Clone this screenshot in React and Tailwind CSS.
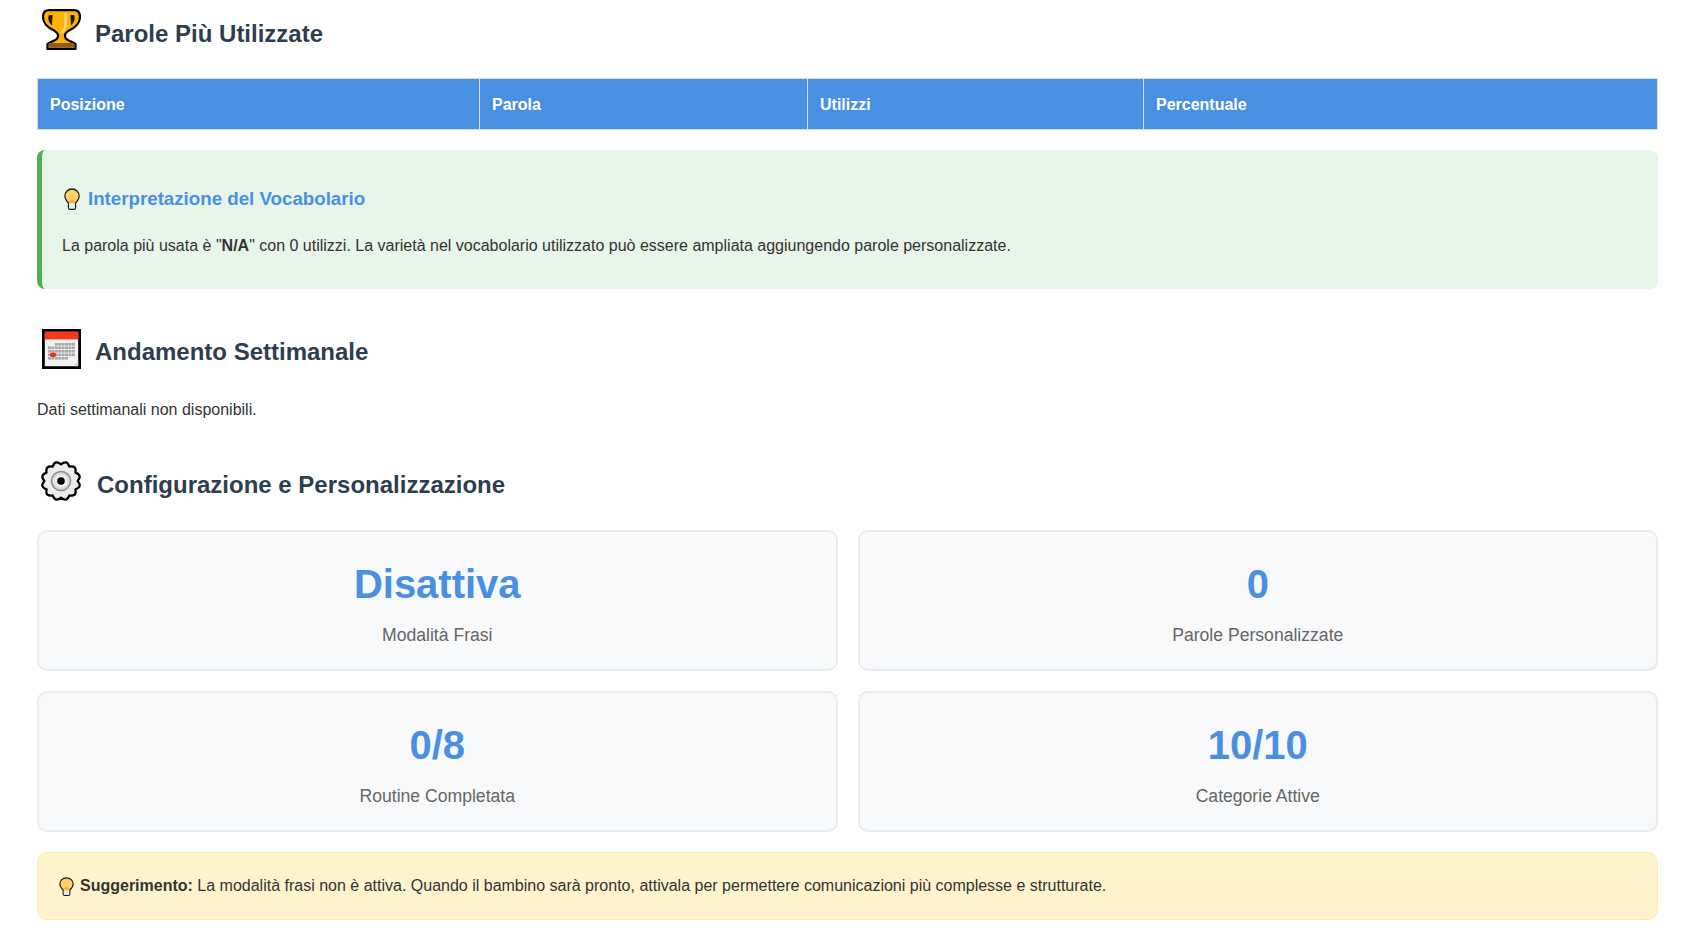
const gearPath = (() => {
  const teeth = 12;
  const cx = 21, cy = 21;
  let d = "";
  for (let i = 0; i < teeth; i++) {
    const a0 = (i / teeth) * Math.PI * 2;
    const a1 = ((i + 0.5) / teeth) * Math.PI * 2;
    const a2 = ((i + 1) / teeth) * Math.PI * 2;
    const p = (r, a) => `${(cx + r * Math.cos(a)).toFixed(2)} ${(cy + r * Math.sin(a)).toFixed(2)}`;
    if (i === 0) d += `M${p(17.5, a0)} `;
    d += `Q${p(23.5, a1)} ${p(17.5, a2)} `;
  }
  return d + "Z";
})();
const Trophy = () => (
  <svg width="39" height="41" viewBox="0 0 39 41" className="ml-[5px] -mt-[1px] shrink-0">
    <path d="M7 1.2 H32 C36 1.2 38 4 38 8 C38 14 33 19 27 21.5 C25 23 23.5 24 23 25.5 V27 C23 29.5 26 31.5 29 32.5 L33.5 35 V40 H5.5 V35 L10 32.5 C13 31.5 16 29.5 16 27 V25.5 C15.5 24 14 23 12 21.5 C6 19 1 14 1 8 C1 4 3 1.2 7 1.2 Z" fill="#ffb300" stroke="#000" strokeWidth="2.2" strokeLinejoin="round" />
    <path d="M7 6 C5.6 9 6.2 13 10 16.5 L10.6 6 Z M32 6 C33.4 9 32.8 13 29 16.5 L28.4 6 Z" fill="#1a1a1a" />
    <path d="M23.5 5 C24.5 13 24 19 20.5 23" fill="none" stroke="#ffd67a" strokeWidth="2.6" strokeLinecap="round" />
    <rect x="6.8" y="34" width="25.4" height="4.8" fill="#8d5a2b" />
  </svg>
);
const cols = [0, 1, 2, 3, 4, 5, 6, 7];
const Calendar = () => (
  <svg width="39" height="40" viewBox="0 0 39 40" className="ml-[5px] shrink-0">
    <rect x="1.4" y="1.4" width="36.2" height="37.2" fill="#f2f2f2" stroke="#000" strokeWidth="2.8" />
    <rect x="2.8" y="2.8" width="33.4" height="7.6" fill="#f4381a" />
    <g fill="#a8a8a8">
      {cols.map((c) => (
        <g key={c}>
          {c > 1 && <rect x={6 + c * 3.4} y="14" width="3" height="2.6" />}
          <rect x={6 + c * 3.4} y="17.5" width="3" height="2.6" />
          <rect x={6 + c * 3.4} y="21" width="3" height="2.6" />
          <rect x={6 + c * 3.4} y="24.5" width="3" height="2.6" />
          {c < 6 && <rect x={6 + c * 3.4} y="28" width="3" height="2.6" />}
        </g>
      ))}
    </g>
    <ellipse cx="11" cy="25.8" rx="3.2" ry="2.3" fill="#f02a1a" />
    <path d="M32 36.2 L36.2 32 V36.2 Z" fill="#d0d0d0" />
  </svg>
);
const Gear = () => (
  <svg width="40" height="40" viewBox="0 0 42 42" className="ml-[4px] shrink-0">
    <path d={gearPath} fill="#ececec" stroke="#000" strokeWidth="2.4" strokeLinejoin="round" />
    <circle cx="21" cy="21" r="10" fill="#dcdcdc" stroke="#8a8a8a" strokeWidth="1.6" />
    <circle cx="21" cy="21" r="6.8" fill="#f0f0f0" />
    <circle cx="21" cy="21" r="4" fill="#000" />
  </svg>
);
const Bulb = ({ className }) => (
  <svg viewBox="0 0 18 22" preserveAspectRatio="none" className={"shrink-0 " + className}>
    <path d="M9 1 C4.5 1 1 4 1 8 C1 11 3 13 5 15 V20 C5 21 6 21.3 7 21.3 H11 C12 21.3 13 21 13 20 V15 C15 13 17 11 17 8 C17 4 13.5 1 9 1 Z" fill="#ffd166" stroke="#1a1a1a" strokeWidth="1.4" />
    <path d="M5.8 14.5 L7.5 12 H10.5 L12.2 14.5 Z" fill="#f5a623" />
    <rect x="5.8" y="15.5" width="6.4" height="5" fill="#e9eef5" />
  </svg>
);
const Heading = ({ icon, children, gap, className }) => (
  <h2 className={"flex items-center text-[24px] leading-[28px] font-bold text-[#2c3e50] " + className}>
    {icon}
    <span className={gap}>{children}</span>
  </h2>
);
const Card = ({ value, label }) => (
  <div className="h-[141px] rounded-[10px] border-2 border-[#e9ecef] bg-[#f8f9fa] pt-[29px] text-center">
    <div className="text-[40px] leading-[46px] font-bold text-[#4a90e2]">{value}</div>
    <div className="mt-[18px] text-[17.6px] leading-[20px] text-[#666666]">{label}</div>
  </div>
);
const headers = [
  ["Posizione", "w-[442px]"],
  ["Parola", "w-[328px]"],
  ["Utilizzi", "w-[336px]"],
  ["Percentuale", ""],
];
export default function App() {
  return (
    <div className="h-[935px] overflow-hidden bg-white pl-[37px] pr-[36px] pt-[9px] font-['Liberation_Sans',Arial,sans-serif] text-[#333333]">
      <Heading icon={<Trophy />} gap="ml-[14px] mt-[7px]" className="h-[42px]">Parole Più Utilizzate</Heading>
      <table className="mt-[27px] w-full table-fixed border-collapse">
        <thead>
          <tr>
            {headers.map(([h, w]) => (
              <th key={h} className={"h-[51px] border border-[#dddddd] bg-[#4a90e2] px-[12px] pt-[2px] text-left text-[16px] font-bold text-white " + w}>{h}</th>
            ))}
          </tr>
        </thead>
      </table>
      <div className="mt-[20px] h-[139px] rounded-[8px] border-l-[5px] border-[#4caf50] bg-[#e8f5e9] pl-[20px] pt-[37px]">
        <div className="flex items-center gap-[8px] pl-[2px] text-[18.72px] leading-[24px] font-bold text-[#4a90e2]">
          <Bulb className="h-[22px] w-[16px]" />
          <span>Interpretazione del Vocabolario</span>
        </div>
        <p className="mt-[25px] text-[16px] leading-[20px]">
          La parola più usata è "<strong>N/A</strong>" con 0 utilizzi. La varietà nel vocabolario utilizzato può essere ampliata aggiungendo parole personalizzate.
        </p>
      </div>
      <Heading icon={<Calendar />} gap="ml-[14px] mt-[5px]" className="mt-[39px] h-[42px]">Andamento Settimanale</Heading>
      <p className="mt-[30px] text-[16px] leading-[20px]">Dati settimanali non disponibili.</p>
      <Heading icon={<Gear />} gap="ml-[16px] mt-[7px]" className="mt-[40px] h-[42px]">Configurazione e Personalizzazione</Heading>
      <div className="mt-[28px] grid grid-cols-2 gap-[20px]">
        <Card value="Disattiva" label="Modalità Frasi" />
        <Card value="0" label="Parole Personalizzate" />
        <Card value="0/8" label="Routine Completata" />
        <Card value="10/10" label="Categorie Attive" />
      </div>
      <div className="mt-[20px] flex h-[68px] items-center gap-[6px] rounded-[10px] border border-[#ffeaa7] bg-[#fff3cd] pl-[21px] text-[16px] text-[#333333]">
        <Bulb className="h-[19px] w-[15px]" />
        <span><strong>Suggerimento:</strong> La modalità frasi non è attiva. Quando il bambino sarà pronto, attivala per permettere comunicazioni più complesse e strutturate.</span>
      </div>
    </div>
  );
}
